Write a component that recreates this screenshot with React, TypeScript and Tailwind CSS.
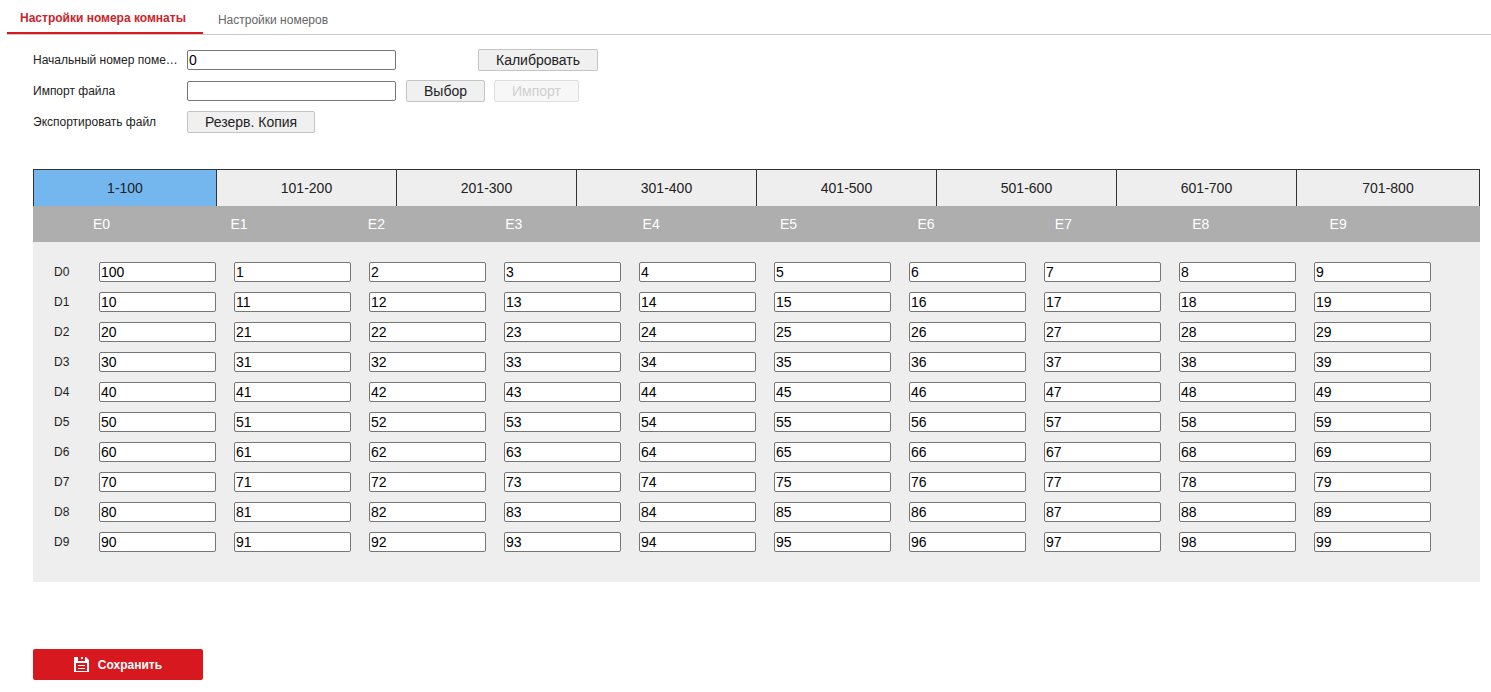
import React, { useState } from "react";

const ranges = ["1-100", "101-200", "201-300", "301-400", "401-500", "501-600", "601-700", "701-800"];
const digits = [0, 1, 2, 3, 4, 5, 6, 7, 8, 9];

const inputStyle = "h-5 border border-[#767676] rounded-[2px] bg-white px-px text-sm leading-4 text-black";
const buttonStyle =
    "h-[22px] px-[17px] border border-[#c4c4c4] rounded-[2px] bg-[#f0f0f0] text-sm leading-5 text-[#222] disabled:border-[#dedede] disabled:bg-[#f7f7f7] disabled:text-[#cfcfcf]";

const SaveIcon = () => (
    <svg width="15" height="15" viewBox="0 0 15 15" fill="none" aria-hidden="true">
        <path
            fillRule="evenodd"
            fill="#fff"
            d="M0 0H12L15 3V15H0ZM4 0V4H11V0H9V2H7V0ZM2 6V14H13V6Z"
        />
        <path d="M4 8.5H11M4 11.5H11" stroke="#fff" />
    </svg>
);

const RoomSettings = () => (
    <div className="flex flex-col gap-[9px] text-xs text-[#222]">
        <div className="flex items-center h-[22px]">
            <label htmlFor="start" className="w-[154px] whitespace-nowrap">
                Начальный номер поме…
            </label>
            <input id="start" type="text" defaultValue="0" className={`${inputStyle} w-[209px]`} />
            <button type="button" className={`${buttonStyle} ml-[82px]`}>
                Калибровать
            </button>
        </div>
        <div className="flex items-center h-[22px]">
            <label htmlFor="file" className="w-[154px]">
                Импорт файла
            </label>
            <input id="file" type="text" className={`${inputStyle} w-[209px]`} />
            <button type="button" className={`${buttonStyle} ml-[10px]`}>
                Выбор
            </button>
            <button type="button" disabled className={`${buttonStyle} ml-[9px]`}>
                Импорт
            </button>
        </div>
        <div className="flex items-center h-[22px]">
            <span className="w-[154px]">Экспортировать файл</span>
            <button type="button" className={buttonStyle}>
                Резерв. Копия
            </button>
        </div>
    </div>
);

const RoomTable = () => {
    const [active, setActive] = useState(0);

    return (
        <div className="bg-[#eeeeee]">
            <div className="grid grid-cols-[183fr_repeat(6,180fr)_183fr] border-t border-r border-[#333]">
                {ranges.map((range, idx) => (
                    <button
                        key={range}
                        type="button"
                        onClick={() => setActive(idx)}
                        className={`h-9 border-l border-[#333] text-sm text-[#222] ${idx === active ? "bg-[#73b7ee]" : "bg-[#eeeeee]"}`}
                    >
                        {range}
                    </button>
                ))}
            </div>

            <table className="block w-full">
                <thead className="block bg-[#aeaeae]">
                    <tr className="grid grid-cols-[60px_repeat(10,minmax(0,1fr))] items-center h-9 pr-[13px]">
                        <td />
                        {digits.map((col) => (
                            <th key={col} scope="col" className="text-left text-sm font-normal text-white">
                                E{col}
                            </th>
                        ))}
                    </tr>
                </thead>
                <tbody className="flex flex-col gap-[10px] pt-5 pb-[30px] pl-[21px] pr-[31px]">
                    {digits.map((row) => (
                        <tr key={row} className="grid grid-cols-[45px_repeat(10,minmax(0,1fr))] items-center h-5">
                            <th scope="row" className="text-left text-xs font-normal text-[#222]">
                                D{row}
                            </th>
                            {digits.map((col) => (
                                <td key={col} className="flex pr-[18px]">
                                    <input
                                        type="text"
                                        aria-label={`D${row} E${col}`}
                                        defaultValue={row * 10 + col || 100}
                                        className={`${inputStyle} w-full min-w-0`}
                                    />
                                </td>
                            ))}
                        </tr>
                    ))}
                </tbody>
            </table>
        </div>
    );
};

const App = () => {
    return (
        <main className="bg-white font-['Liberation_Sans',Arial,sans-serif]">
            <nav className="flex items-end ml-[7px] h-[35px] border-b border-[#cccccc] text-xs">
                <a href="#room" className="h-[34px] pl-[13px] pr-[17px] pt-[10px] border-b-2 border-[#d7191f] font-bold text-[#c9252b]">
                    Настройки номера комнаты
                </a>
                <a href="#numbers" className="h-[34px] px-[15px] pt-3 text-[#666]">
                    Настройки номеров
                </a>
            </nav>

            <div className="pl-[33px] pr-[11px] pt-[14px]">
                <RoomSettings />
                <div className="mt-9">
                    <RoomTable />
                </div>
                <button
                    type="button"
                    className="flex items-center justify-center gap-[9px] w-[170px] h-[31px] mt-[67px] rounded-[2px] bg-[#d7191f] text-xs font-bold text-white"
                >
                    <SaveIcon />
                    Сохранить
                </button>
            </div>
        </main>
    );
};

export default App;
